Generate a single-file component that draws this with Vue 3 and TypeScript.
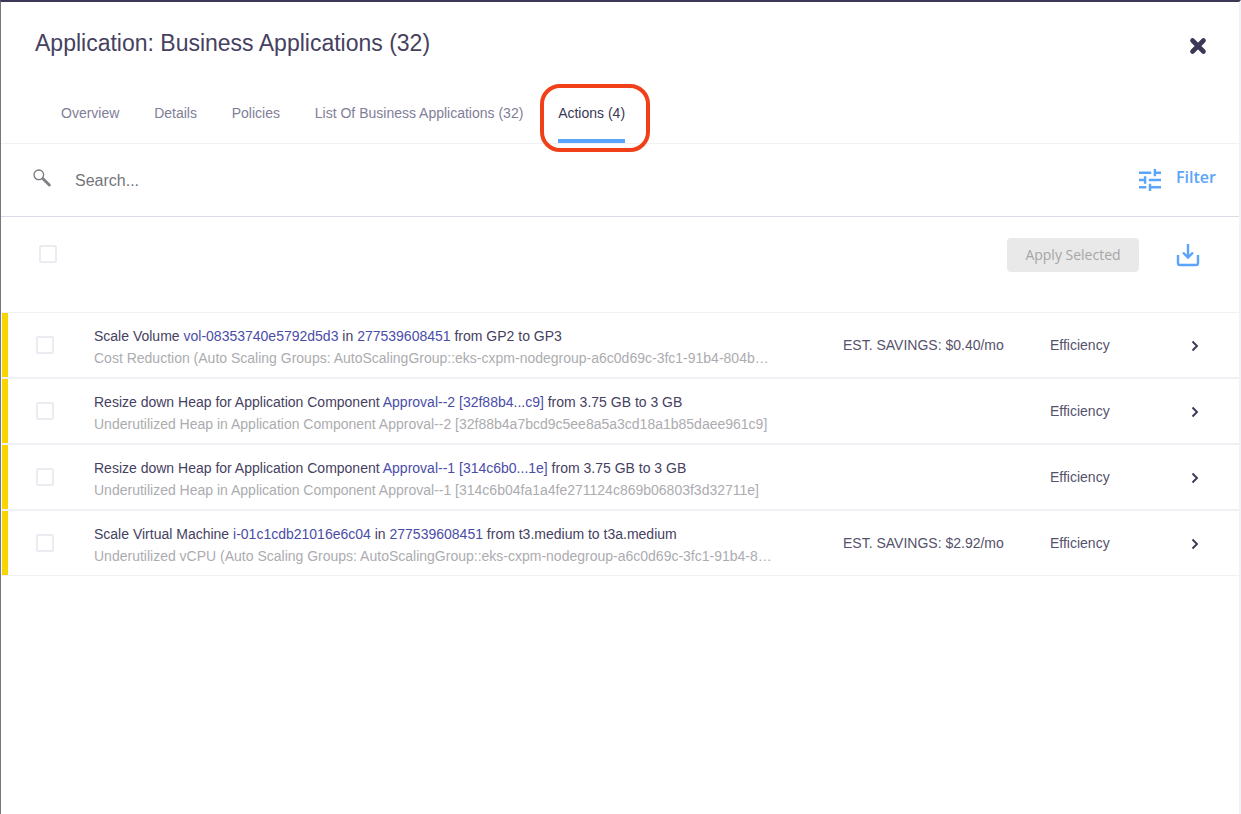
<script setup lang="ts">
interface ActionRow {
  parts: { text: string; link?: boolean }[];
  detail: string;
  savings?: string;
}

const tabs = ['Overview', 'Details', 'Policies', 'List Of Business Applications (32)', 'Actions (4)'];
const activeTab = 'Actions (4)';

const rows: ActionRow[] = [
  {
    parts: [
      { text: 'Scale Volume ' },
      { text: 'vol-08353740e5792d5d3', link: true },
      { text: ' in ' },
      { text: '277539608451', link: true },
      { text: ' from GP2 to GP3' },
    ],
    detail: 'Cost Reduction (Auto Scaling Groups: AutoScalingGroup::eks-cxpm-nodegroup-a6c0d69c-3fc1-91b4-804b…',
    savings: 'EST. SAVINGS: $0.40/mo',
  },
  {
    parts: [
      { text: 'Resize down Heap for Application Component ' },
      { text: 'Approval--2 [32f88b4...c9]', link: true },
      { text: ' from 3.75 GB to 3 GB' },
    ],
    detail: 'Underutilized Heap in Application Component Approval--2 [32f88b4a7bcd9c5ee8a5a3cd18a1b85daee961c9]',
  },
  {
    parts: [
      { text: 'Resize down Heap for Application Component ' },
      { text: 'Approval--1 [314c6b0...1e]', link: true },
      { text: ' from 3.75 GB to 3 GB' },
    ],
    detail: 'Underutilized Heap in Application Component Approval--1 [314c6b04fa1a4fe271124c869b06803f3d32711e]',
  },
  {
    parts: [
      { text: 'Scale Virtual Machine ' },
      { text: 'i-01c1cdb21016e6c04', link: true },
      { text: ' in ' },
      { text: '277539608451', link: true },
      { text: ' from t3.medium to t3a.medium' },
    ],
    detail: 'Underutilized vCPU (Auto Scaling Groups: AutoScalingGroup::eks-cxpm-nodegroup-a6c0d69c-3fc1-91b4-8…',
    savings: 'EST. SAVINGS: $2.92/mo',
  },
];
</script>

<template>
  <div class="page">
    <header class="head">
      <h1 class="title">Application: Business Applications (32)</h1>
      <svg class="close" width="18" height="18" viewBox="0 0 18 18">
        <path d="M3.5 3.5 L14.5 14.5 M14.5 3.5 L3.5 14.5" stroke="#3b3755" stroke-width="4.6" stroke-linecap="round" />
      </svg>
    </header>

    <nav class="tabs">
      <div v-for="tab in tabs" :key="tab" class="tab" :class="{ active: tab === activeTab }">
        {{ tab }}
        <span v-if="tab === activeTab" class="callout"></span>
      </div>
    </nav>

    <div class="search">
      <svg class="search-icon" width="20" height="20" viewBox="0 0 20 20" fill="none">
        <circle cx="6.800" cy="6.800" r="4.800" stroke="#77777d" stroke-width="1.300" />
        <path d="M11 10.800 L17.300 17" stroke="#808086" stroke-width="3" stroke-linecap="round" />
      </svg>
      <span class="search-text">Search...</span>
      <div class="filter">
        <svg width="22" height="22" viewBox="3 3 18 18" fill="#5aa5fb">
          <path d="M3 17v2h6v-2H3zM3 5v2h10V5H3zm10 16v-2h8v-2h-8v-2h-2v6h2zM7 9v2H3v2h4v2h2V9H7zm14 4v-2H11v2h10zm-6-4h2V7h4V5h-4V3h-2v6z" />
        </svg>
        <span class="filter-label">Filter</span>
      </div>
    </div>

    <div class="toolbar">
      <span class="check select-all"></span>
      <button class="apply" type="button" disabled>Apply Selected</button>
      <svg class="download" width="24" height="24" viewBox="0 0 24 24" fill="none" stroke="#5aa5fb" stroke-width="2.400">
        <path d="M12 1v13.500M7 9.500l5 5 5-5" />
        <path d="M2 12v8a2 2 0 0 0 2 2h16a2 2 0 0 0 2-2v-8" />
      </svg>
    </div>

    <ul class="rows">
      <li v-for="(row, i) in rows" :key="i" class="row">
        <span class="bar"></span>
        <span class="check row-check"></span>
        <div class="text">
          <div class="line"><template v-for="(p, j) in row.parts" :key="j"><span :class="{ link: p.link }">{{ p.text }}</span></template></div>
          <div class="detail">{{ row.detail }}</div>
        </div>
        <div class="savings">{{ row.savings }}</div>
        <div class="category">Efficiency</div>
        <svg class="chevron" width="8" height="12" viewBox="0 0 8 12" fill="none">
          <path d="M1.500 1.500 L6 6 L1.500 10.500" stroke="#3b3755" stroke-width="1.900" />
        </svg>
      </li>
    </ul>
  </div>
</template>

<style>
html,
body {
  margin: 0;
  background: #fff;
}
</style>

<style scoped>
.page {
  box-sizing: border-box;
  height: 814px;
  overflow: hidden;
  border-top: 2px solid #3b3755;
  border-left: 1px solid #77767f;
  border-right: 2px solid #f2f1f5;
  font-family: "Liberation Sans", Arial, sans-serif;
  color: #3b3755;
  background: #fff;
}

.head {
  display: flex;
  align-items: center;
  justify-content: space-between;
  height: 82px;
  padding: 0 32px 0 34px;
}

.title {
  margin: 0;
  font-size: 23px;
  font-weight: 400;
  color: #45415f;
}

.close {
  margin-top: 5px;
}

.tabs {
  display: flex;
  gap: 34.800px;
  height: 59px;
  padding-left: 60px;
  border-bottom: 1px solid #f1f0f5;
}

.tab {
  position: relative;
  box-sizing: border-box;
  height: 59px;
  padding-top: 21px;
  font-size: 14px;
  line-height: 16px;
  color: #817e98;
}

.tab.active {
  color: #3b3755;
  border-bottom: 4px solid #5aa5fb;
}

.callout {
  position: absolute;
  left: -18px;
  right: -25px;
  top: 0;
  height: 68px;
  box-sizing: border-box;
  border: 4px solid #f0401a;
  border-radius: 20px;
}

.search {
  display: flex;
  align-items: center;
  height: 72px;
  padding: 0 23px 0 31px;
  border-bottom: 1px solid #dddce6;
}

.search-icon {
  margin-top: -4px;
}

.search-text {
  margin-left: 23px;
  margin-top: 2px;
  font-size: 16px;
  color: #75757c;
}

.filter {
  display: flex;
  align-items: center;
  gap: 15px;
  margin-left: auto;
  font-family: "Open Sans", sans-serif;
  font-size: 16px;
  font-weight: 600;
  color: #5aa5fb;
}

.filter-label {
  margin-bottom: 6px;
}

.toolbar {
  display: flex;
  align-items: center;
  box-sizing: border-box;
  height: 95px;
  padding: 0 39px 20px 38px;
}

.check {
  flex: none;
  box-sizing: border-box;
  width: 18px;
  height: 18px;
  border: 2px solid #ecebf2;
  border-radius: 2px;
  background: #fff;
}

.select-all {
  margin-bottom: 2px;
}

.row-check {
  margin-bottom: 2px;
}

.apply {
  margin-left: auto;
  width: 132px;
  height: 34px;
  padding: 0;
  border: 0;
  border-radius: 4px;
  background: #e9e9e9;
  font-family: "Open Sans", sans-serif;
  font-size: 14px;
  color: #a6a6a6;
}

.download {
  margin-left: 37px;
}

.rows {
  margin: 0;
  padding: 0;
  list-style: none;
}

.row {
  display: flex;
  align-items: center;
  box-sizing: border-box;
  height: 66px;
  margin-left: 1px;
  border-top: 1px solid #f1f0f5;
  box-shadow: inset 0 -1px 0 #f1f0f5;
}

.bar {
  flex: none;
  align-self: stretch;
  width: 6px;
  margin-right: 28px;
  margin-bottom: 1px;
  background: #f7d600;
}

.text {
  flex: none;
  width: 749px;
  margin-left: 40px;
  padding-top: 2px;
  font-size: 14px;
  line-height: 22px;
  white-space: nowrap;
}

.line {
  color: #45415f;
}

.link {
  color: #4a4da8;
}

.detail {
  color: #acacb0;
}

.savings {
  flex: none;
  width: 207px;
  margin-bottom: 2px;
  white-space: nowrap;
  font-size: 14px;
  color: #55526b;
}

.category {
  flex: none;
  margin-bottom: 2px;
  font-size: 14px;
  color: #55526b;
}

.chevron {
  margin-left: 81px;
}
</style>
